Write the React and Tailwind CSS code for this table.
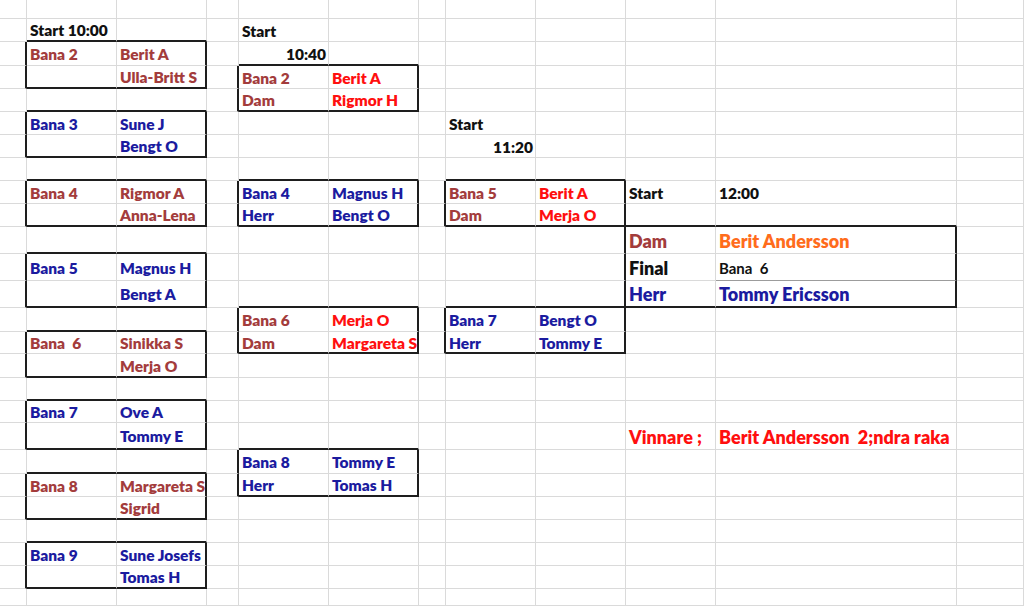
const ROWS = 26
const COLS = 12

// [rowStart, rowEnd, colStart, colEnd] – black framed match boxes
const BOXES = [
  [2, 3, 1, 2], [5, 6, 1, 2], [8, 9, 1, 2], [11, 12, 1, 2],
  [14, 15, 1, 2], [17, 18, 1, 2], [20, 21, 1, 2], [23, 24, 1, 2],
  [3, 4, 4, 5], [8, 9, 4, 5], [13, 14, 4, 5], [19, 20, 4, 5],
  [8, 9, 7, 8], [13, 14, 7, 8],
  [10, 12, 9, 10],
]

// "row,col": [text, tone, variant]
const CELLS = {
  '1,1': ['Start 10:00', 'k'],
  '1,4': ['Start', 'k'],
  '2,1': ['Bana 2', 'br'], '2,2': ['Berit A', 'br'],
  '2,4': ['10:40', 'k', 'right'],
  '3,2': ['Ulla-Britt S', 'br'],
  '3,4': ['Bana 2', 'br'], '3,5': ['Berit A', 'rd'],
  '4,4': ['Dam', 'br'], '4,5': ['Rigmor H', 'rd'],
  '5,1': ['Bana 3', 'bl'], '5,2': ['Sune J', 'bl'],
  '5,7': ['Start', 'k'],
  '6,2': ['Bengt O', 'bl'],
  '6,7': ['11:20', 'k', 'right'],
  '8,1': ['Bana 4', 'br'], '8,2': ['Rigmor A', 'br'],
  '8,4': ['Bana 4', 'bl'], '8,5': ['Magnus H', 'bl'],
  '8,7': ['Bana 5', 'br'], '8,8': ['Berit A', 'rd'],
  '8,9': ['Start', 'k'], '8,10': ['12:00', 'k'],
  '9,2': ['Anna-Lena', 'br'],
  '9,4': ['Herr', 'bl'], '9,5': ['Bengt O', 'bl'],
  '9,7': ['Dam', 'br'], '9,8': ['Merja O', 'rd'],
  '10,9': ['Dam', 'br', 'big'], '10,10': ['Berit Andersson', 'or', 'big'],
  '11,1': ['Bana 5', 'bl'], '11,2': ['Magnus H', 'bl'],
  '11,9': ['Final', 'k', 'big'], '11,10': ['Bana  6', 'k', 'small'],
  '12,2': ['Bengt A', 'bl'],
  '12,9': ['Herr', 'bl', 'big'], '12,10': ['Tommy Ericsson', 'bl', 'big'],
  '13,4': ['Bana 6', 'br'], '13,5': ['Merja O', 'rd'],
  '13,7': ['Bana 7', 'bl'], '13,8': ['Bengt O', 'bl'],
  '14,1': ['Bana  6', 'br'], '14,2': ['Sinikka S', 'br'],
  '14,4': ['Dam', 'br'], '14,5': ['Margareta S', 'rd'],
  '14,7': ['Herr', 'bl'], '14,8': ['Tommy E', 'bl'],
  '15,2': ['Merja O', 'br'],
  '17,1': ['Bana 7', 'bl'], '17,2': ['Ove A', 'bl'],
  '18,2': ['Tommy E', 'bl'],
  '18,9': ['Vinnare ;', 'rd', 'win'], '18,10': ['Berit Andersson  2;ndra raka', 'rd', 'win'],
  '19,4': ['Bana 8', 'bl'], '19,5': ['Tommy E', 'bl'],
  '20,1': ['Bana 8', 'br'], '20,2': ['Margareta S', 'br'],
  '20,4': ['Herr', 'bl'], '20,5': ['Tomas H', 'bl'],
  '21,2': ['Sigrid', 'br'],
  '23,1': ['Bana 9', 'bl'], '23,2': ['Sune Josefs', 'bl'],
  '24,2': ['Tomas H', 'bl'],
}

const TONE = {
  br: 'text-[#a33c3c]',
  rd: 'text-[#ff0f0f]',
  bl: 'text-[#1b1b9f]',
  or: 'text-[#ff6c1c]',
  k: 'text-[#111111]',
}

const SIZE = {
  big: 'text-[18px] font-extrabold pt-[1px]',
  win: 'text-[18px] font-extrabold pt-[2px]',
  small: 'text-[15px] font-bold pt-[2px]',
}

const boxAt = (r, c) =>
  BOXES.find(([r0, r1, c0, c1]) => r >= r0 && r <= r1 && c >= c0 && c <= c1)

function Cell({ r, c }) {
  const own = boxAt(r, c)
  const right = boxAt(r, c + 1)
  const below = boxAt(r + 1, c)
  const blackR = (own && own[3] === c) || (right && right[2] === c + 1)
  const blackB = (own && own[1] === r) || (below && below[0] === r + 1)
  const finalLine = r === 11 && c === 10

  const content = CELLS[`${r},${c}`]
  const [text, tone, variant] = content || []

  return (
    <div
      className={`flex items-center min-w-0 ${
        blackR ? 'border-r-2 border-r-[#1e1e1e]' : 'border-r border-r-[#dadada]'
      } ${
        blackB
          ? 'border-b-2 border-b-[#1e1e1e]'
          : finalLine
            ? 'border-b border-b-[#9c9c9c]'
            : 'border-b border-b-[#dadada]'
      } ${variant === 'right' ? 'justify-end pr-[2px]' : 'pl-[3px]'}`}
    >
      {content && (
        <span
          className={`whitespace-pre leading-none ${TONE[tone]} ${
            SIZE[variant] || 'text-[15.5px] font-extrabold pt-[3px]'
          }`}
        >
          {text}
        </span>
      )}
    </div>
  )
}

export default function App() {
  const cells = []
  for (let r = 0; r < ROWS; r++) {
    for (let c = 0; c < COLS; c++) cells.push(<Cell key={`${r}-${c}`} r={r} c={c} />)
  }

  return (
    <div className="w-[1024px] h-[606px] overflow-hidden bg-white font-['Lato','Open_Sans',sans-serif]">
      <div className="grid grid-cols-[27px_90px_90px_32px_90px_90px_27px_90px_90px_90px_241px_67px] grid-rows-[19px_23px_24px_23px_23px_23px_23px_23px_23px_23px_27px_27px_27px_24px_22px_24px_23px_22px_27px_24px_23px_23px_23px_23px_23px_17px]">
        {cells}
      </div>
    </div>
  )
}
